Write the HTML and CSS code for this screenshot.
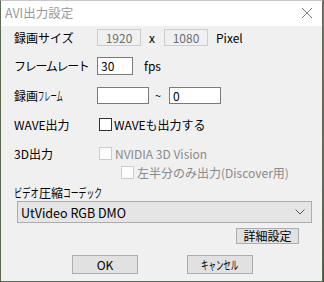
FILE: index.html
```html
<!DOCTYPE html>
<html lang="ja">
<head>
<meta charset="utf-8">
<title>AVI出力設定</title>
<link rel="stylesheet" href="styles.css">
</head>
<body>
<div class="window">
  <div class="titlebar">
    <span class="title">AVI出力設定</span>
    <svg class="close" width="12" height="12" viewBox="0 0 12 12"><path d="M1 1L11 11M11 1L1 11" stroke="#7c7c7c" stroke-width="1" fill="none"/></svg>
  </div>
  <div class="content">
    <div class="row r1">
      <span class="label">録画サイズ</span>
      <div class="box disabled w-size center">1920</div>
      <span class="sep-x">x</span>
      <div class="box disabled w-size center">1080</div>
      <span class="unit">Pixel</span>
    </div>
    <div class="row r2">
      <span class="label tight">フレームレート</span>
      <div class="box w-fps">30</div>
      <span class="unit fps">fps</span>
    </div>
    <div class="row r3">
      <span class="label">録画<span class="hw hw-frame">フレーム</span></span>
      <div class="box w-frame"></div>
      <span class="tilde">~</span>
      <div class="box w-frame">0</div>
    </div>
    <div class="row r4">
      <span class="label">WAVE出力</span>
      <span class="check ck-main"></span>
      <span class="cklabel">WAVEも出力する</span>
    </div>
    <div class="row r5">
      <span class="label">3D出力</span>
      <span class="check disabled ck-main"></span>
      <span class="cklabel dis">NVIDIA 3D Vision</span>
    </div>
    <div class="row r6">
      <span class="check disabled"></span>
      <span class="cklabel dis">左半分のみ出力(Discover用)</span>
    </div>
    <div class="row r7">
      <span class="label"><span class="hw hw-video">ビデオ</span>圧縮<span class="hw hw-codec">コーデック</span></span>
    </div>
    <div class="select">
      <span class="sel-text">UtVideo RGB DMO</span>
      <svg class="chev" width="10" height="6" viewBox="0 0 10 6"><path d="M0.5 0.5L5 5L9.5 0.5" stroke="#555" stroke-width="1" fill="none"/></svg>
    </div>
    <div class="row r8">
      <div class="btn btn-detail">詳細設定</div>
    </div>
    <div class="row r9">
      <div class="btn btn-main">OK</div>
      <div class="btn btn-main"><span class="hw hw-cancel">キャンセル</span></div>
    </div>
  </div>
</div>
</body>
</html>
```
FILE: styles.css
```css
html, body {
  margin: 0;
  padding: 0;
}
body {
  width: 324px;
  height: 282px;
  background: linear-gradient(180deg, #8a6e52 0%, #7a6a50 60%, #46523c 100%);
  font-family: "Noto Sans CJK JP", "Liberation Sans", sans-serif;
  font-size: 12px;
  color: #000;
  overflow: hidden;
}
.window {
  width: 321px;
  height: 280px;
  border: 1px solid #5d6a52;
  border-top-color: #c8c8c8;
  background: #f0f0f0;
  display: flex;
  flex-direction: column;
}
.titlebar {
  height: 25px;
  background: #fff;
  display: flex;
  align-items: center;
  justify-content: space-between;
  padding: 0 9px 0 4px;
  flex: none;
}
.title {
  color: #9a9a9a;
  font-size: 12.5px;
  line-height: 1;
}
.close {
  margin-top: -2px;
}
.content {
  display: flex;
  flex-direction: column;
  padding-left: 13px;
}
.row {
  display: flex;
  align-items: center;
  height: 17px;
  line-height: 1;
}
.r1 { margin-top: 3px; }
.r2 { margin-top: 11px; height: 18px; }
.r3 { margin-top: 12px; }
.r4 { margin-top: 12px; }
.r5 { margin-top: 12px; }
.r6 { margin-top: 2px; padding-left: 107px; }
.r7 { margin-top: 4px; height: 15px; }
.r8 { margin-top: 5px; height: 16px; justify-content: flex-end; padding-right: 23px; }
.r9 { margin-top: 11px; height: 19px; padding-left: 58px; gap: 49px; }
.label {
  width: 83px;
  flex: none;
  white-space: nowrap;
}
.label.tight {
  letter-spacing: -1.3px;
}
.hw {
  display: inline-block;
  transform-origin: left center;
}
.hw-frame { transform: scaleX(0.52); margin-right: -23px; }
.hw-video { transform: scaleX(0.69); margin-right: -11px; }
.hw-codec { transform: scaleX(0.65); margin-right: -21px; }
.hw-cancel { transform: scaleX(0.62); margin-right: -23px; }
.box {
  box-sizing: border-box;
  height: 100%;
  border: 1px solid #7a7a7a;
  background: #fff;
  display: flex;
  align-items: center;
  padding-left: 3px;
}
.box.disabled {
  border-color: #cccccc;
  background: #f0f0f0;
  color: #6d6d6d;
}
.box.center {
  justify-content: center;
  padding-left: 0;
}
.w-size { width: 44px; }
.w-fps { width: 36px; }
.w-frame { width: 52px; }
.sep-x {
  margin: 0 9px 0 8px;
}
.unit {
  margin-left: 8px;
}
.unit.fps { margin-left: 11px; }
.tilde {
  font-size: 11px;
  margin: 0 8px 0 6px;
}
.check {
  box-sizing: border-box;
  width: 13px;
  height: 13px;
  border: 1px solid #333;
  background: #fff;
  flex: none;
}
.check.disabled {
  border-color: #cccccc;
  background: #fcfcfc;
}
.ck-main { margin-left: 2px; }
.cklabel {
  margin-left: 2px;
  white-space: nowrap;
}
.cklabel.dis { color: #8a8a8a; margin-left: 3px; }
.select {
  box-sizing: border-box;
  margin-top: 1px;
  margin-left: 3px;
  width: 295px;
  height: 22px;
  border: 1px solid #acacac;
  background: #e5e5e5;
  display: flex;
  align-items: center;
  justify-content: space-between;
  padding: 0 6px 0 3px;
  flex: none;
}
.sel-text {
  font-size: 12.5px;
}
.btn {
  box-sizing: border-box;
  border: 1px solid #adadad;
  background: #e1e1e1;
  display: flex;
  align-items: center;
  justify-content: center;
  height: 100%;
}
.btn-detail { width: 63px; }
.btn-main { width: 66px; }
```
